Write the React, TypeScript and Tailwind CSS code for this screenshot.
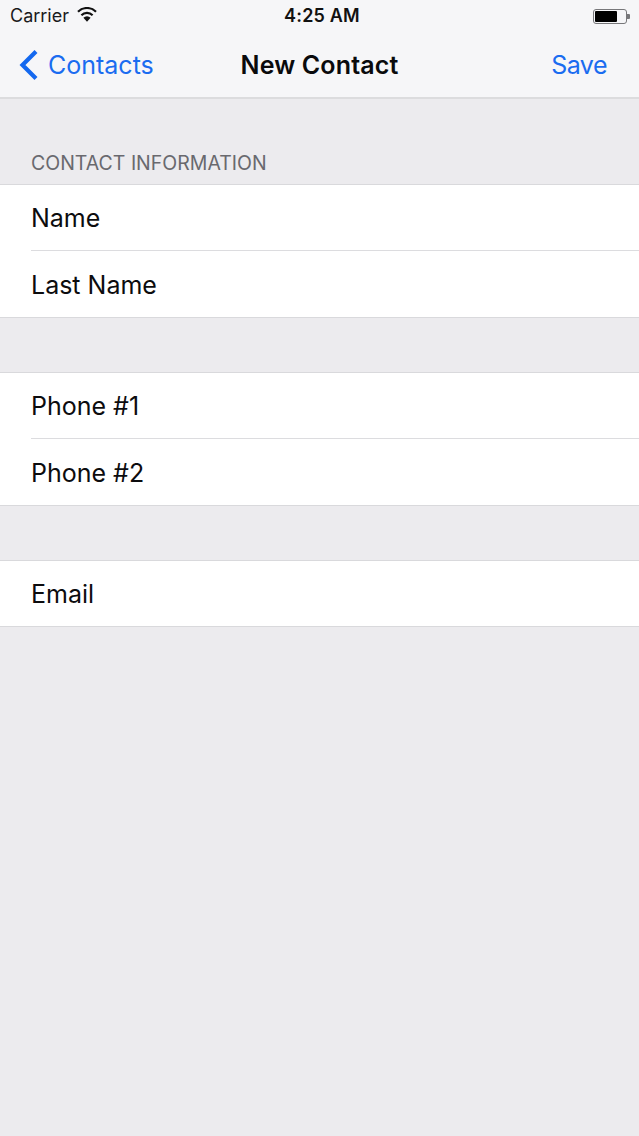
const Row = ({ text, last, single }: { text: string; last?: boolean; single?: boolean }) => {
  let cls = "h-[66px] flex items-center border-b border-[#dcdcdf]";
  if (last) cls = "h-[66px] flex items-center pt-[1px]";
  if (single) cls = "h-[65px] flex items-center";
  return (
    <div className="pl-[31px]">
      <div className={cls}>
        <span className="text-[25px] leading-[30px] text-[#0c0c0e]">{text}</span>
      </div>
    </div>
  );
};

const App = (): JSX.Element => {
  return (
    <div className="w-[639px] h-[1136px] bg-[#ecebee] overflow-hidden font-['Inter','Liberation_Sans',sans-serif]">
      <div className="h-[99px] bg-[#f6f6f8] border-b-2 border-[#dcdcde]">
        <div className="h-[32px] flex items-center justify-between pl-[10px] pr-[9px] relative">
          <div className="flex items-center gap-[8px]">
            <span className="text-[18px] leading-[22px] text-[#1a1a1c]">Carrier</span>
            <svg width="20" height="15" viewBox="0 0 20 15" className="mb-[3px]">
              <path d="M10 14.8 L6.4 10.8 A5 5 0 0 1 13.6 10.8 Z" fill="#111" />
              <path d="M4.4 8.2 A8 8 0 0 1 15.6 8.2" fill="none" stroke="#111" strokeWidth="2.2" />
              <path d="M1 4.8 A12.6 12.6 0 0 1 19 4.8" fill="none" stroke="#111" strokeWidth="2.2" />
            </svg>
          </div>
          <span className="absolute left-[284px] text-[18px] leading-[22px] font-semibold text-[#111] tracking-[0.2px]">4:25 AM</span>
          <div className="flex items-center">
            <div className="w-[34px] h-[15px] rounded-[3px] border border-[#77777a] p-[1px]">
              <div className="w-[22px] h-full bg-black rounded-[1px]"></div>
            </div>
            <div className="w-[3px] h-[5px] bg-[#77777a] rounded-r-[1px]"></div>
          </div>
        </div>
        <div className="h-[65px] flex items-center justify-between pl-[19px] pr-[32px] relative">
          <div className="flex items-center gap-[9px]">
            <svg width="20" height="32" viewBox="0 0 20 32">
              <path d="M17 2.5 L3.5 16 L17 29.5" fill="none" stroke="#1468ef" strokeWidth="4.2" />
            </svg>
            <span className="text-[25px] leading-[30px] text-[#1a6cf0]">Contacts</span>
          </div>
          <span className="absolute left-0 right-0 text-center text-[25px] leading-[30px] font-semibold text-[#0a0a0c] tracking-[0.15px]">New Contact</span>
          <span className="text-[25px] leading-[30px] text-[#1a6cf0] tracking-[-0.5px]">Save</span>
        </div>
      </div>

      <div className="h-[85px] flex items-end pl-[31px] pb-[10px]">
        <span className="text-[19.5px] leading-[22px] text-[#69696e]">CONTACT INFORMATION</span>
      </div>
      <div className="bg-white border-y border-[#d9d9dc]">
        <Row text="Name" />
        <Row text="Last Name" last />
      </div>

      <div className="h-[54px]"></div>
      <div className="bg-white border-y border-[#d9d9dc]">
        <Row text="Phone #1" />
        <Row text="Phone #2" last />
      </div>

      <div className="h-[54px]"></div>
      <div className="bg-white border-y border-[#d9d9dc]">
        <Row text="Email" single />
      </div>
    </div>
  );
};

export default App;
